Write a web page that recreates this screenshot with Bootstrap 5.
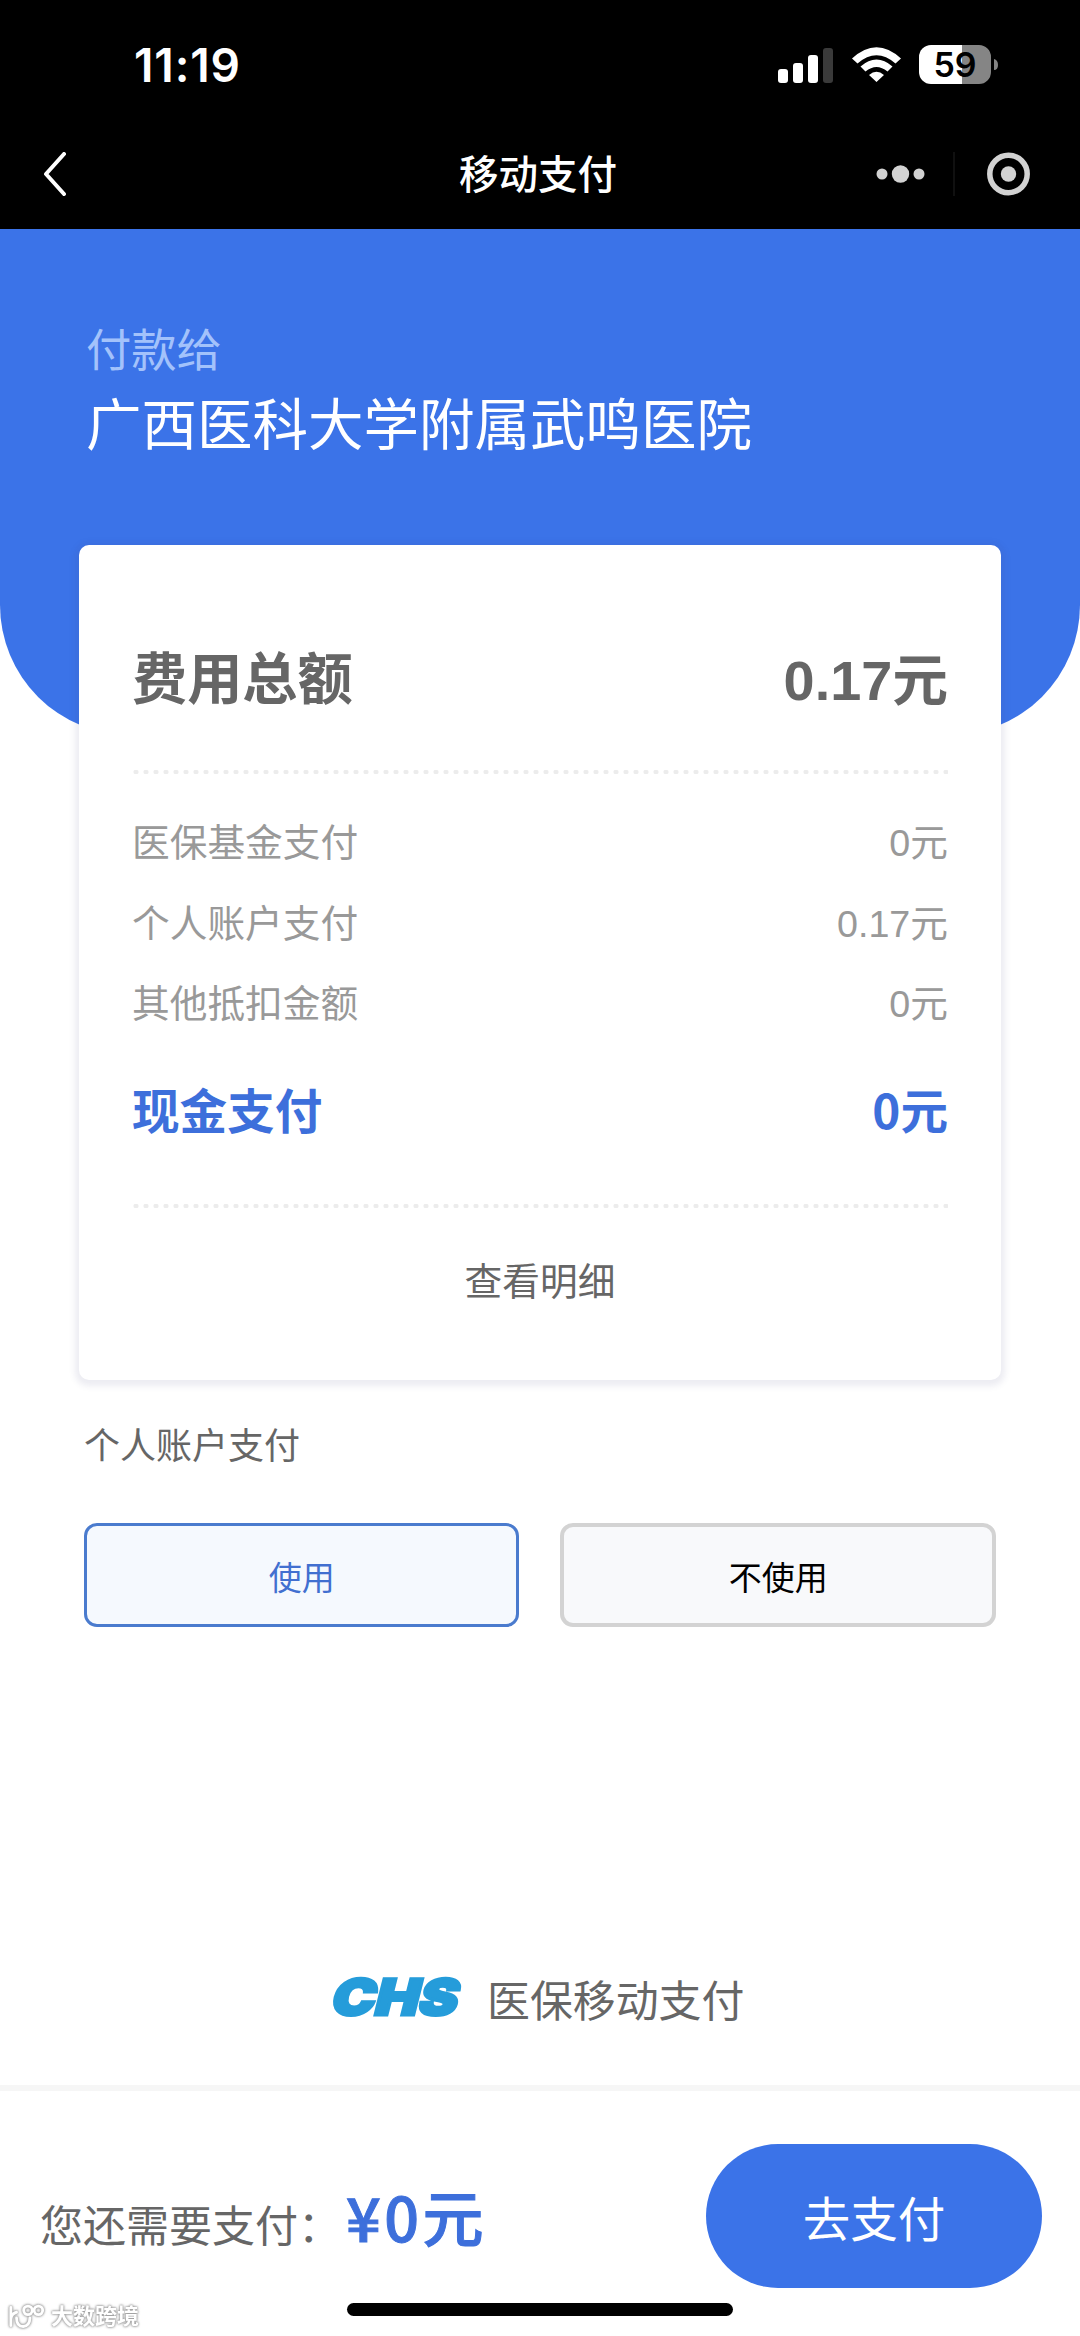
<!-- index.html -->
<!DOCTYPE html>
<html lang="zh-CN">
<head>
  <meta charset="UTF-8">
  <meta name="viewport" content="width=device-width, initial-scale=1.0">
  <title>移动支付</title>

  <!-- Bootstrap CSS -->
  <link href="https://cdn.jsdelivr.net/npm/bootstrap@5.3.0/dist/css/bootstrap.min.css" rel="stylesheet">
  <style>
    body{
      font-family: 'Liberation Sans', 'Noto Sans CJK SC', sans-serif;
      color: #666;
      line-height: 1;
      height: 2336px;
      overflow: hidden;
    }
    svg { display: block; }

    /* Status bar and title bar */
    .top-bar { height: 229px; background: #000; color: #fff; }
    .status-row { height: 120px; padding: 9px 80px 0 134px; }
    .clock { font: 600 46px/1 'Inter', sans-serif; letter-spacing: .9px; }
    .title-row {
      display: grid;
      grid-template-columns: 1fr auto 1fr;
      align-items: center;
      height: 109px;
      padding: 0 49px 2px 43px;
    }
    .page-title { font-size: 39.5px; font-weight: 500; padding: 4px 0 0 2px; }

    /* Blue header */
    .payee {
      height: 506px;
      padding: 99px 86px 0;
      background: #3b73e8;
      border-radius: 0 0 130px 130px;
    }
    .payee-label { font-size: 45.3px; line-height: 48px; color: #a3c2fb; }
    .payee-name { font-size: 55.5px; line-height: 60px; margin-top: 20px; color: #fff; }

    /* Bill */
    .bill {
      margin: -190px 79px 0;
      height: 835px;
      padding: 0 53px;
      border: 0;
      border-radius: 10px;
      box-shadow: 0 2px 6px 4px rgba(70, 70, 130, .1);
      color: #666;
    }
    .total-row { height: 225px; padding-top: 47px; font-size: 55.2px; }
    .total-row span:last-child { font-size: 55.8px; }
    .dots { height: 4px; background: radial-gradient(circle at 4px 2px, #ececec 2px, transparent 3px) 0 0 / 10px 4px; }
    .fee-rows { padding-top: 30px; }
    .fee-row { height: 80.5px; font-size: 37.7px; color: #999; }
    .cash-row {
      height: 62px;
      margin-top: 32px;
      margin-bottom: 64px;
      font-family: 'Noto Sans CJK SC', sans-serif;
      font-size: 47.6px;
      color: #3d6fdb;
    }
    .detail-link { font-size: 37.7px; height: 150px; color: #666; }

    /* Account choice */
    .choice { padding: 47px 84px 0; }
    .choice-label { font-size: 36px; line-height: 40px; margin-bottom: 56px; }
    .choice-row { gap: 41px; }
    .choice-btn {
      height: 104px;
      padding: 6px 0 0;
      border: 4px solid #d3d3d3;
      border-radius: 13px;
      background: #f8f9fb;
      color: #000;
      font-size: 33px;
      line-height: 1;
    }
    .choice-btn.on { border: 3px solid #4a7bce; background: #f5f9fe; color: #416fd0; }

    .brand { height: 458px; padding: 335px 0 0 323px; gap: 18px; }
    .brand-name { font-size: 42.9px; line-height: 46px; padding-top: 17px; }

    /* Footer */
    .pay-bar { height: 250px; border-top: 6px solid #f6f6f6; padding: 53px 38px 0 40px; }
    .due-line { padding-top: 41px; }
    .due { font-size: 43px; }
    .due-sum {
      margin-left: 5px;
      font-family: 'Noto Sans CJK SC', sans-serif;
      font-size: 61px;
      font-weight: 500;
      letter-spacing: 3.5px;
      color: #3d6fdb;
      -webkit-text-stroke: 1px #3d6fdb;
    }
    .pay-btn { width: 336px; height: 144px; padding: 9px 0 0; background: #3b73e8; color: #fff; font-size: 47.5px; line-height: 1; border: 0; }
    .home-bar { position: absolute; left: 347px; top: 2303px; width: 386px; height: 13px; border-radius: 7px; background: #000; }
    .watermark {
      position: absolute; left: 8px; top: 2303px;
      gap: 5px;
      color: #fff;
      font-size: 22px;
      font-weight: 700;
      filter: drop-shadow(0 0 1px #999) drop-shadow(0 0 1px #aaa);
    }
  </style>
</head>
<body class="bg-white position-relative">

  <header class="top-bar">
    <div class="status-row d-flex align-items-center justify-content-between">
      <span class="clock">11:19</span>
      <svg width="222" height="56" viewBox="0 -8 222 56">
        <g fill="#fff">
          <rect x="0" y="24" width="10" height="14" rx="3"/>
          <rect x="15" y="18" width="10" height="20" rx="3"/>
          <rect x="30" y="10" width="10" height="28" rx="3"/>
          <rect x="45" y="3" width="10" height="35" rx="3" fill="#3a3a3a"/>
        </g>
        <!-- wifi -->
        <path fill="#fff" d="M98.500 37L91 30Q98.500 23.500 106 30ZM82.500 21.500Q98.500 7.500 114.500 21.500L109.500 26.500Q98.500 17.500 87.500 26.500ZM74 13.500Q98.500 -9 123 13.500L117.500 18.500Q98.500 2 79.500 18.500Z"/>
        <!-- battery -->
        <path fill="#fff" d="M184 0H153A12 12 0 0 0 141 12V27A12 12 0 0 0 153 39H184Z"/>
        <path fill="#858585" d="M184 0H201A12 12 0 0 1 213 12V27A12 12 0 0 1 201 39H184ZM216 14Q220 15 220 20T216 25Z"/>
        <text x="177" y="32" text-anchor="middle" font-family="Inter" font-weight="600" font-size="34" fill="#000">59</text>
      </svg>
    </div>
    <div class="title-row">
      <svg width="24" height="44" viewBox="0 0 24 44"><path d="M21 2L3 22L21 42" fill="none" stroke="#fff" stroke-width="4" stroke-linecap="round" stroke-linejoin="round"/></svg>
      <span class="page-title">移动支付</span>
      <svg class="ms-auto" width="155" height="44" viewBox="0 0 155 44" fill="#d2d2d2">
        <circle cx="6" cy="22" r="5.500"/><circle cx="24.500" cy="22" r="8.700"/><circle cx="43" cy="22" r="5.500"/>
        <path d="M78 -5V49" stroke="#101010" stroke-width="2"/>
        <circle cx="132.500" cy="22" r="18.700" fill="none" stroke="#d2d2d2" stroke-width="5.500"/>
        <circle cx="132.500" cy="22" r="7.700"/>
      </svg>
    </div>
  </header>

  <section class="payee">
    <div class="payee-label">付款给</div>
    <div class="payee-name">广西医科大学附属武鸣医院</div>
  </section>

  <main>
    <div class="card bill">
      <div class="total-row d-flex align-items-center justify-content-between fw-bold">
        <span>费用总额</span><span>0.17元</span>
      </div>
      <div class="dots"></div>
      <div class="fee-rows">
        <div class="fee-row d-flex align-items-center justify-content-between"><span>医保基金支付</span><span>0元</span></div>
        <div class="fee-row d-flex align-items-center justify-content-between"><span>个人账户支付</span><span>0.17元</span></div>
        <div class="fee-row d-flex align-items-center justify-content-between"><span>其他抵扣金额</span><span>0元</span></div>
      </div>
      <div class="cash-row d-flex align-items-center justify-content-between fw-bold"><span>现金支付</span><span>0元</span></div>
      <div class="dots"></div>
      <a class="detail-link d-flex align-items-center justify-content-center text-decoration-none" href="#">查看明细</a>
    </div>

    <div class="choice">
      <div class="choice-label">个人账户支付</div>
      <div class="choice-row d-flex">
        <button type="button" class="btn choice-btn on flex-fill w-50">使用</button>
        <button type="button" class="btn choice-btn flex-fill w-50">不使用</button>
      </div>
    </div>

    <div class="brand d-flex align-items-start">
      <svg width="146" height="76" viewBox="-8 -18 146 76">
        <text transform="translate(-2 35) skewX(-14)" textLength="126" lengthAdjust="spacingAndGlyphs" font-family="Inter" font-weight="900" font-size="50" fill="#259cda" stroke="#259cda" stroke-width="3">CHS</text>
      </svg>
      <span class="brand-name">医保移动支付</span>
    </div>
  </main>

  <footer class="pay-bar d-flex align-items-start justify-content-between">
    <div class="due-line d-flex align-items-baseline"><span class="due">您还需要支付：</span><span class="due-sum">¥0元</span></div>
    <button type="button" class="btn rounded-pill pay-btn">去支付</button>
  </footer>

  <div class="home-bar"></div>
  <div class="watermark d-flex align-items-center">
    <svg width="38" height="28" viewBox="0 0 40 28" fill="none" stroke="#fff" stroke-width="3" stroke-linecap="round"><path d="M3 4V23M3 16Q4 10 9 9M9 15Q9 24 16 24Q23 23 23 15"/><circle cx="21" cy="7" r="4.500"/><circle cx="32" cy="7" r="4.500"/></svg>
    <span>大数跨境</span>
  </div>

  <script src="https://cdn.jsdelivr.net/npm/bootstrap@5.3.0/dist/js/bootstrap.bundle.min.js"></script>
</body>
</html>
